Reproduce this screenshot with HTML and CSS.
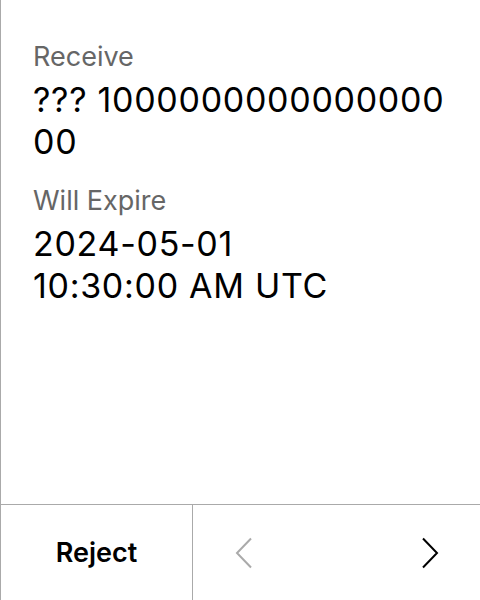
FILE: index.html
```html
<!DOCTYPE html>
<html>
<head>
<meta charset="utf-8">
<link rel="stylesheet" href="styles.css">
</head>
<body>
<div class="screen">
  <div class="content">
    <div class="field">
      <div class="label">Receive</div>
      <div class="value">??? 100000000000000000</div>
    </div>
    <div class="field">
      <div class="label">Will Expire</div>
      <div class="value">2024-05-01<br>10:30:00 AM UTC</div>
    </div>
  </div>
  <div class="footer">
    <div class="reject">Reject</div>
    <div class="nav">
      <svg class="arrow prev" width="18" height="32" viewBox="0 0 18 32"><path d="M16 1.5 L2 16 L16 30.5" fill="none" stroke="#aaaaaa" stroke-width="2"/></svg>
      <svg class="arrow next" width="18" height="32" viewBox="0 0 18 32"><path d="M2 1.5 L16 16 L2 30.5" fill="none" stroke="#000" stroke-width="2"/></svg>
    </div>
  </div>
</div>
</body>
</html>
```
FILE: styles.css
```css
html, body {
  margin: 0;
  padding: 0;
  background: #fff;
}
body {
  font-family: Inter, "Noto Sans", sans-serif;
  color: #000;
}
.screen {
  width: 479px;
  height: 600px;
  border-left: 1px solid #aaaaaa;
  display: flex;
  flex-direction: column;
}
.content {
  flex: 1;
  padding: 41px 30px 0 32px;
  display: flex;
  flex-direction: column;
  gap: 22px;
}
.label {
  font-size: 27px;
  line-height: 32px;
  color: #666666;
}
.value {
  font-size: 34px;
  line-height: 42px;
  letter-spacing: 0.7px;
  margin-top: 6px;
  word-break: break-all;
}
.footer {
  height: 95px;
  border-top: 1px solid #aaaaaa;
  display: flex;
}
.reject {
  width: 191px;
  border-right: 1px solid #aaaaaa;
  display: flex;
  align-items: center;
  justify-content: center;
  font-size: 27px;
  font-weight: 600;
}
.nav {
  flex: 1;
  display: flex;
  align-items: center;
  justify-content: space-between;
  padding: 0 41px 0 42px;
}
.arrow {
  display: block;
}
```
